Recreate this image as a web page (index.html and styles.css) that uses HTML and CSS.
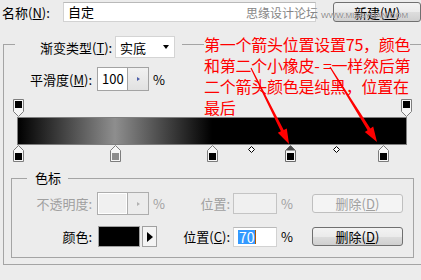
FILE: index.html
```html
<!DOCTYPE html>
<html lang="zh-CN">
<head>
<meta charset="utf-8">
<title>渐变编辑器</title>
<link rel="stylesheet" href="styles.css">
</head>
<body>
<div class="dialog">
  <div class="name-row">
    <span class="name-label">名称(<u>N</u>):</span>
    <div class="text-input name-input">自定</div>
    <button class="btn new-btn">新建(<u>W</u>)</button>
  </div>

  <div class="grad-group">
    <div class="grad-head">
      <span class="legend-label">渐变类型(<u>T</u>):</span>
      <div class="select"><span>实底</span><span class="caret"></span></div>
    </div>

    <div class="smooth-row">
      <span class="row-label smooth-label">平滑度(<u>M</u>):</span>
      <div class="spin"><span class="spin-val">100</span><span class="spin-btn"><i class="tri"></i></span></div>
      <span class="unit">%</span>
    </div>

    <div class="ramp">
      <div class="stop-row top-stops">
        <div class="track">
          <svg class="stop" style="left:0%" width="11" height="18" viewBox="0 0 11 18"><path d="M0.5 0.5H10.5V12.5L5.5 17.5L0.5 12.5Z" fill="#f6f6f6" stroke="#7d7d7d"/><rect x="2" y="2" width="7" height="7" fill="#000"/></svg>
          <svg class="stop" style="left:100%" width="11" height="18" viewBox="0 0 11 18"><path d="M0.5 0.5H10.5V12.5L5.5 17.5L0.5 12.5Z" fill="#f6f6f6" stroke="#7d7d7d"/><rect x="2" y="2" width="7" height="7" fill="#000"/></svg>
        </div>
      </div>
      <div class="bar"></div>
      <div class="stop-row bottom-stops">
        <div class="track">
          <svg class="stop" style="left:0%" width="11" height="17" viewBox="0 0 11 17"><path d="M5.5 0.5L10.5 5.5V16.5H0.5V5.5Z" fill="#f6f6f6" stroke="#7d7d7d"/><rect x="2" y="8" width="7" height="7" fill="#000"/></svg>
          <svg class="stop" style="left:25%" width="11" height="17" viewBox="0 0 11 17"><path d="M5.5 0.5L10.5 5.5V16.5H0.5V5.5Z" fill="#f6f6f6" stroke="#7d7d7d"/><rect x="2" y="8" width="7" height="7" fill="#8d8d8d"/></svg>
          <svg class="stop" style="left:50%" width="11" height="17" viewBox="0 0 11 17"><path d="M5.5 0.5L10.5 5.5V16.5H0.5V5.5Z" fill="#f6f6f6" stroke="#7d7d7d"/><rect x="2" y="8" width="7" height="7" fill="#000"/></svg>
          <svg class="mid" style="left:60%" width="7" height="7" viewBox="0 0 7 7"><path d="M3.5 0.5L6.5 3.5L3.5 6.5L0.5 3.5Z" fill="#fff" stroke="#000"/></svg>
          <svg class="stop" style="left:70%" width="11" height="17" viewBox="0 0 11 17"><path d="M5.5 0.5L10.5 5.5V16.5H0.5V5.5Z" fill="#f6f6f6" stroke="#6a6a6a"/><path d="M5.5 0.8L10.2 5.5H0.8Z" fill="#4a4a4a"/><rect x="2" y="8" width="7" height="7" fill="#000"/></svg>
          <svg class="mid" style="left:82%" width="7" height="7" viewBox="0 0 7 7"><path d="M3.5 0.5L6.5 3.5L3.5 6.5L0.5 3.5Z" fill="#fff" stroke="#000"/></svg>
          <svg class="stop" style="left:94%" width="11" height="17" viewBox="0 0 11 17"><path d="M5.5 0.5L10.5 5.5V16.5H0.5V5.5Z" fill="#f6f6f6" stroke="#7d7d7d"/><rect x="2" y="8" width="7" height="7" fill="#000"/></svg>
        </div>
      </div>
    </div>

    <div class="stop-group">
      <div class="group-head"><span class="legend">色标</span></div>
      <div class="field-row row-disabled">
        <span class="row-label">不透明度:</span>
        <div class="spin spin-disabled"><span class="spin-val"></span><span class="spin-btn"><i class="tri"></i></span></div>
        <span class="unit">%</span>
        <span class="row-label2 pos1">位置:</span>
        <div class="text-input pos-input pos-disabled"></div>
        <span class="unit">%</span>
        <button class="btn del-btn btn-disabled">删除(<u>D</u>)</button>
      </div>
      <div class="field-row row-color">
        <span class="row-label">颜色:</span>
        <div class="swatch"></div>
        <div class="swatch-arrow"><i class="tri-big"></i></div>
        <span class="row-label2 pos2">位置(<u>C</u>):</span>
        <div class="text-input pos-input pos-active"><span class="sel">70</span><span class="cursor"></span></div>
        <span class="unit">%</span>
        <button class="btn del-btn">删除(<u>D</u>)</button>
      </div>
    </div>
  </div>

  <div class="watermark"><span class="wm-cn">思缘设计论坛</span><span class="wm-en">WWW.MISSYUAN.COM</span></div>

  <div class="note"><span>第一个箭头位置设置75，颜色</span><br><span>和第二个小橡皮- =一样然后第</span><br><span>二个箭头颜色是纯黑，位置在</span><br><span>最后</span></div>

  <svg class="arrows" width="421" height="280" viewBox="0 0 421 280">
    <polygon fill="#f00" points="250.5,68.3 280.9,131.3 277.8,132.8 289,144 286.8,128.4 283.7,129.9 251.5,67.7"/>
    <polygon fill="#f00" points="329.5,67.3 367.6,130.2 364.8,132 377,142 373.2,126.6 370.4,128.5 330.5,66.7"/>
  </svg>
</div>
</body>
</html>
```

FILE: styles.css
```css
html, body {
  margin: 0;
  padding: 0;
  background: #ececec;
}

.dialog {
  position: relative;
  width: 421px;
  height: 280px;
  overflow: hidden;
  background: #ececec;
  font-family: "Noto Sans CJK SC", "Noto Sans", sans-serif;
  font-size: 13px;
  color: #000;
}

u {
  text-decoration: underline;
  text-underline-offset: 1px;
}

/* top row */
.name-row {
  display: flex;
  align-items: center;
  height: 22px;
  padding-top: 2px;
  box-sizing: border-box;
}

.name-label {
  margin-left: 2px;
  width: 61px;
  white-space: nowrap;
}

.text-input {
  box-sizing: border-box;
  background: #fff;
  border: 1px solid #d2d2d2;
  border-top-color: #b9b9b9;
}

.name-input {
  width: 253px;
  height: 20px;
  line-height: 18px;
  padding-left: 4px;
}

.btn {
  box-sizing: border-box;
  font: inherit;
  color: #000;
  padding: 0;
  border: 1px solid #707070;
  border-radius: 3px;
  background: linear-gradient(#f3f3f3 0%, #ebebeb 50%, #dddddd 51%, #cfcfcf 100%);
  display: flex;
  align-items: center;
  justify-content: center;
  white-space: nowrap;
}

.new-btn {
  margin-left: 17px;
  width: 88px;
  height: 20px;
}

/* gradient group */
.grad-group {
  margin: 22px 0 0 3px;
  width: 440px;
  box-sizing: border-box;
  border: 1px solid #a4a4a4;
  border-right: none;
}

.grad-head {
  position: relative;
  z-index: 2;
  margin: -9px 0 0 11px;
  width: 167px;
  height: 22px;
  box-sizing: border-box;
  padding: 0 7px 0 25px;
  background: #ececec;
  display: flex;
  align-items: center;
  justify-content: space-between;
  white-space: nowrap;
}

.select {
  box-sizing: border-box;
  width: 60px;
  height: 22px;
  background: #fff;
  border: 1px solid #d4d4d4;
  display: flex;
  align-items: center;
  justify-content: space-between;
  padding: 0 4px 0 4px;
}

.caret {
  width: 0;
  height: 0;
  border-left: 3.5px solid transparent;
  border-right: 3.5px solid transparent;
  border-top: 4px solid #000;
  margin-right: 1px;
}

.smooth-row {
  display: flex;
  align-items: center;
  height: 24px;
  margin-top: 9px;
}

.row-label {
  width: 80px;
  text-align: right;
  white-space: nowrap;
}

.smooth-label {
  width: 88px;
}

.spin {
  box-sizing: border-box;
  display: flex;
  width: 52px;
  height: 24px;
  margin-left: 5px;
  border: 1px solid #a3a3a3;
  background: #fff;
}

.spin-val {
  box-sizing: border-box;
  width: 29px;
  padding-left: 4px;
  line-height: 22px;
}

.spin-btn {
  flex: 1;
  border-left: 1px solid #a3a3a3;
  background: linear-gradient(#f1f1f1, #e1e1e1);
  display: flex;
  align-items: center;
  justify-content: center;
}

.tri {
  width: 0;
  height: 0;
  border-left: 3px solid #4b5da8;
  border-top: 2.5px solid transparent;
  border-bottom: 2.5px solid transparent;
}

.unit {
  margin-left: 4px;
  width: 12px;
}

/* ramp */
.ramp {
  position: relative;
  z-index: 3;
  margin: 7px 0 0 13px;
  width: 390px;
  height: 65px;
}

.stop-row {
  padding: 0 1px;
}

.top-stops {
  height: 19px;
}

.bottom-stops {
  height: 18px;
}

.track {
  position: relative;
  height: 100%;
}

.stop {
  position: absolute;
  top: 0;
  margin-left: -5px;
}

.top-stops .stop {
  top: 1px;
}

.mid {
  position: absolute;
  top: 1px;
  margin-left: -3px;
}

.bar {
  box-sizing: border-box;
  height: 28px;
  border: 1px solid #7f7f7f;
  background: linear-gradient(to right, #000 0%, #8e8e8e 25%, #000 50%, #000 100%);
}

/* color stop group */
.stop-group {
  margin: 15px 0 6px 7px;
  width: 403px;
  box-sizing: border-box;
  border: 1px solid #a4a4a4;
  padding-bottom: 10px;
}

.group-head {
  margin: -9px 0 0 15px;
  height: 16px;
  line-height: 16px;
  display: flex;
}

.legend {
  background: #ececec;
  padding: 0 7px 0 8px;
}

.field-row {
  display: flex;
  align-items: center;
}

.row-disabled {
  margin-top: 6px;
  height: 23px;
  color: #a0a0a0;
}

.row-color {
  margin-top: 11px;
  height: 21px;
}

.spin-disabled {
  height: 23px;
  border-color: #adadad;
  background: #f0f0f0;
}

.spin-disabled .spin-val {
  background: #f0f0f0;
  box-shadow: inset 0 0 0 1px #fff;
}

.spin-disabled .spin-btn {
  border-left-color: #adadad;
  background: #ececec;
}

.spin-disabled .tri {
  border-left-color: #b2b2b2;
}

.row-label2 {
  text-align: right;
  white-space: nowrap;
}

.pos1 {
  width: 65px;
}

.pos2 {
  width: 73px;
}

.pos-input {
  margin-left: 3px;
  width: 44px;
}

.pos-disabled {
  height: 21px;
  background: #f0f0f0;
  border-color: #c4c4c4;
}

.pos-active {
  height: 20px;
  display: flex;
  align-items: center;
  padding-left: 4px;
}

.sel {
  background: #3399ff;
  color: #fff;
  line-height: 14px;
  font-size: 14px;
  padding: 0 0 0 1px;
}

.cursor {
  width: 1px;
  height: 14px;
  background: #b05a00;
}

.del-btn {
  margin-left: 19px;
  width: 91px;
  height: 19px;
}

.btn-disabled {
  border-color: #bfbfbf;
  background: #f4f4f4;
  color: #a0a0a0;
}

.swatch {
  box-sizing: border-box;
  margin-left: 6px;
  width: 42px;
  height: 21px;
  border: 1px solid #a0a0a0;
  background: #000;
}

.swatch-arrow {
  box-sizing: border-box;
  margin-left: 2px;
  width: 15px;
  height: 21px;
  border: 1px solid #a0a0a0;
  background: #f4f4f4;
  display: flex;
  align-items: center;
  justify-content: center;
}

.tri-big {
  width: 0;
  height: 0;
  border-left: 6px solid #000;
  border-top: 5px solid transparent;
  border-bottom: 5px solid transparent;
  margin-left: 1px;
}

/* overlays */
.watermark {
  position: absolute;
  left: 246px;
  top: 3px;
  z-index: 4;
  color: #868686;
  white-space: nowrap;
  line-height: 20px;
  text-shadow: 0 0 1px #fff;
}

.wm-cn {
  font-size: 12px;
}

.wm-en {
  font-family: "Liberation Sans", Arial, sans-serif;
  font-size: 8px;
  margin-left: 3px;
}

.note {
  position: absolute;
  left: 204px;
  top: 34px;
  z-index: 1;
  color: #ff0000;
  font-size: 16px;
  line-height: 21px;
  letter-spacing: -0.25px;
  white-space: nowrap;
}

.note span {
  background: #ececec;
}

.arrows {
  position: absolute;
  left: 0;
  top: 0;
  z-index: 5;
  pointer-events: none;
}
```
